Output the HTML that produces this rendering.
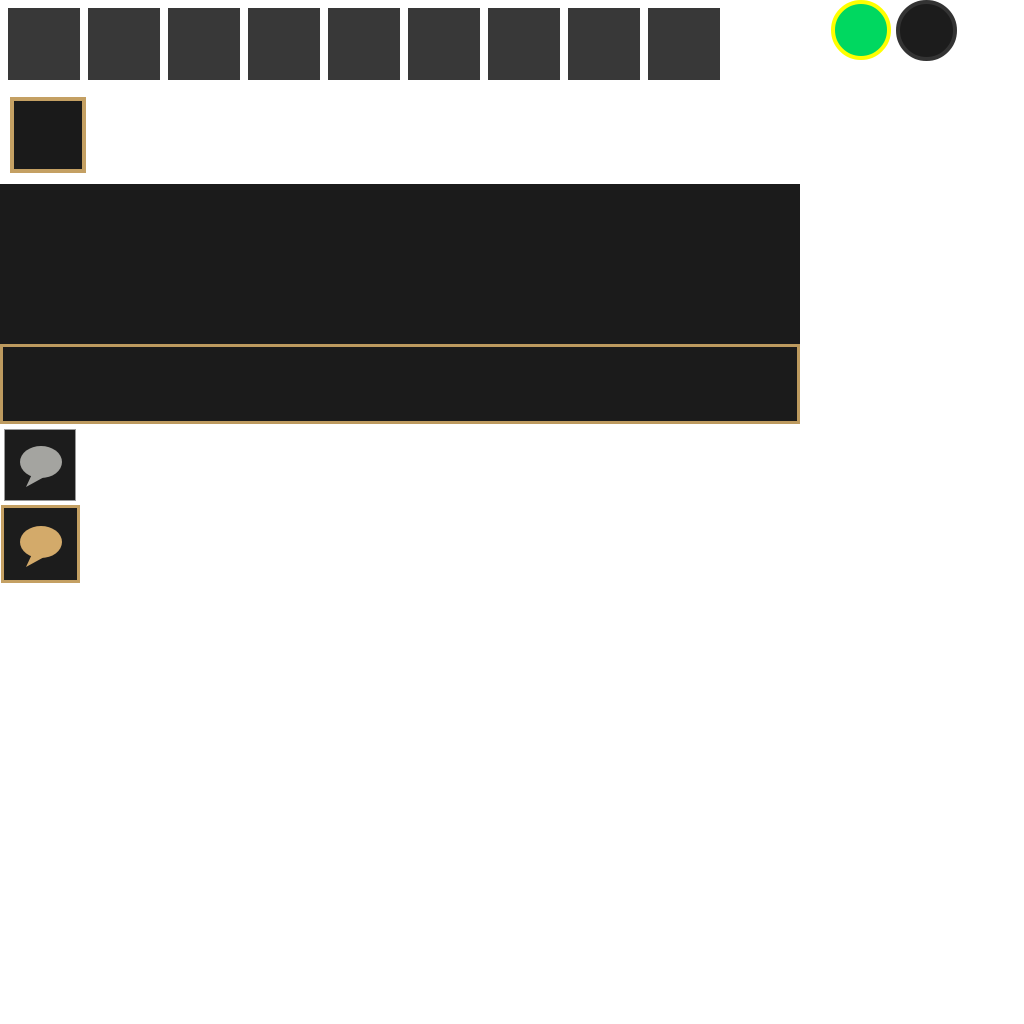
<!DOCTYPE html><html><head><style>
body{margin:0;width:1024px;height:1024px;background:#fff;position:relative;overflow:hidden}
.t{position:absolute;top:8px;width:72px;height:72px;background:#383838}
.a{position:absolute;box-sizing:border-box}
</style></head><body>
<div class="t" style="left:8px"></div><div class="t" style="left:88px"></div><div class="t" style="left:168px"></div><div class="t" style="left:248px"></div><div class="t" style="left:328px"></div><div class="t" style="left:408px"></div><div class="t" style="left:488px"></div><div class="t" style="left:568px"></div><div class="t" style="left:648px"></div>
<div class="a" style="left:831px;top:0;width:60px;height:60px;border-radius:50%;background:#00d860;border:4px solid #ffff00"></div>
<div class="a" style="left:896px;top:0;width:61px;height:61px;border-radius:50%;background:#1c1c1c;border:4px solid #333"></div>
<div class="a" style="left:10px;top:97px;width:76px;height:76px;background:#1a1a1a;border:4px solid #c4a063"></div>
<div class="a" style="left:0;top:184px;width:800px;height:160px;background:#1b1b1b"></div>
<div class="a" style="left:0;top:344px;width:800px;height:80px;background:#1b1b1b;border:3px solid #bd9a5f"></div>
<div class="a" style="left:4px;top:429px;width:72px;height:72px;background:#1c1c1c;border:1px solid #999"></div>
<div class="a" style="left:1px;top:505px;width:79px;height:78px;background:#1c1c1c;border:3px solid #c4a063"></div>
<svg style="position:absolute;left:0;top:420px" width="100" height="170">
<ellipse cx="41" cy="42" rx="21" ry="16" fill="#a4a4a0"/><path d="M33 52 L26 67 L46 56Z" fill="#a4a4a0"/>
<ellipse cx="41" cy="122" rx="21" ry="16" fill="#d3aa6a"/><path d="M33 132 L26 147 L46 136Z" fill="#d3aa6a"/>
</svg>
</body></html>
